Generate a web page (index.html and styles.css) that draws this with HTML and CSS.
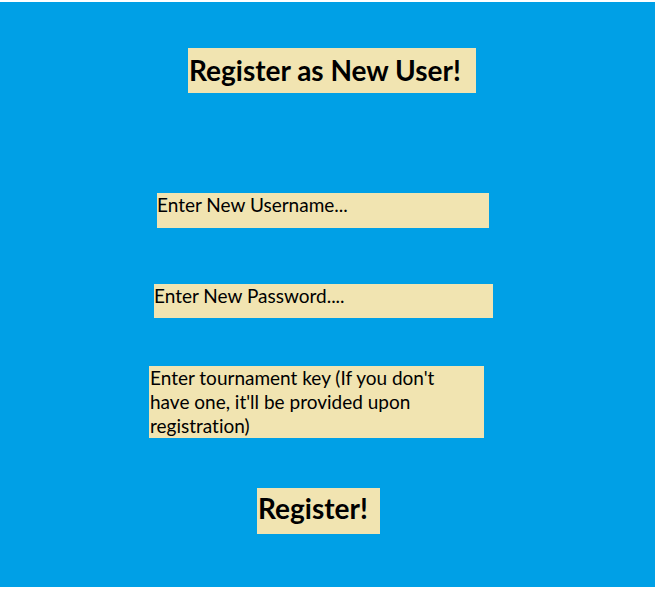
FILE: index.html
```html
<!DOCTYPE html>
<html>
<head>
<meta charset="utf-8">
<link rel="stylesheet" href="styles.css">
</head>
<body>
<div class="page">
  <div class="box title">Register as New User!</div>
  <div class="box field user">Enter New Username...</div>
  <div class="box field pass">Enter New Password....</div>
  <div class="box field key">Enter tournament key (If you don't have one, it'll be provided upon registration)</div>
  <div class="box button">Register!</div>
</div>
</body>
</html>
```
FILE: styles.css
```css
html, body {
  margin: 0;
  padding: 0;
  background: #ffffff;
}
.page {
  margin-top: 2px;
  width: 655px;
  height: 585px;
  background: #00a0e6;
  display: flex;
  flex-direction: column;
  align-items: flex-start;
  font-family: Lato, "Open Sans", sans-serif;
  font-variant-ligatures: none;
  color: #000;
}
.box {
  background: #f1e4b1;
  box-sizing: border-box;
}
.title {
  margin: 46px 0 0 188px;
  width: 288px;
  height: 45px;
  font-weight: bold;
  font-size: 28px;
  line-height: 45px;
  padding-left: 1px;
  white-space: nowrap;
}
.field {
  font-size: 19px;
  line-height: 24px;
}
.user {
  margin: 100px 0 0 157px;
  width: 332px;
  height: 35px;
}
.pass {
  margin: 56px 0 0 154px;
  width: 339px;
  height: 34px;
}
.key {
  margin: 48px 0 0 149px;
  width: 335px;
  height: 72px;
  padding-left: 1px;
  padding-right: 34px;
}
.button {
  margin: 50px 0 0 257px;
  width: 123px;
  height: 46px;
  font-weight: bold;
  font-size: 28px;
  line-height: 40px;
  padding-left: 1px;
  white-space: nowrap;
}
```
